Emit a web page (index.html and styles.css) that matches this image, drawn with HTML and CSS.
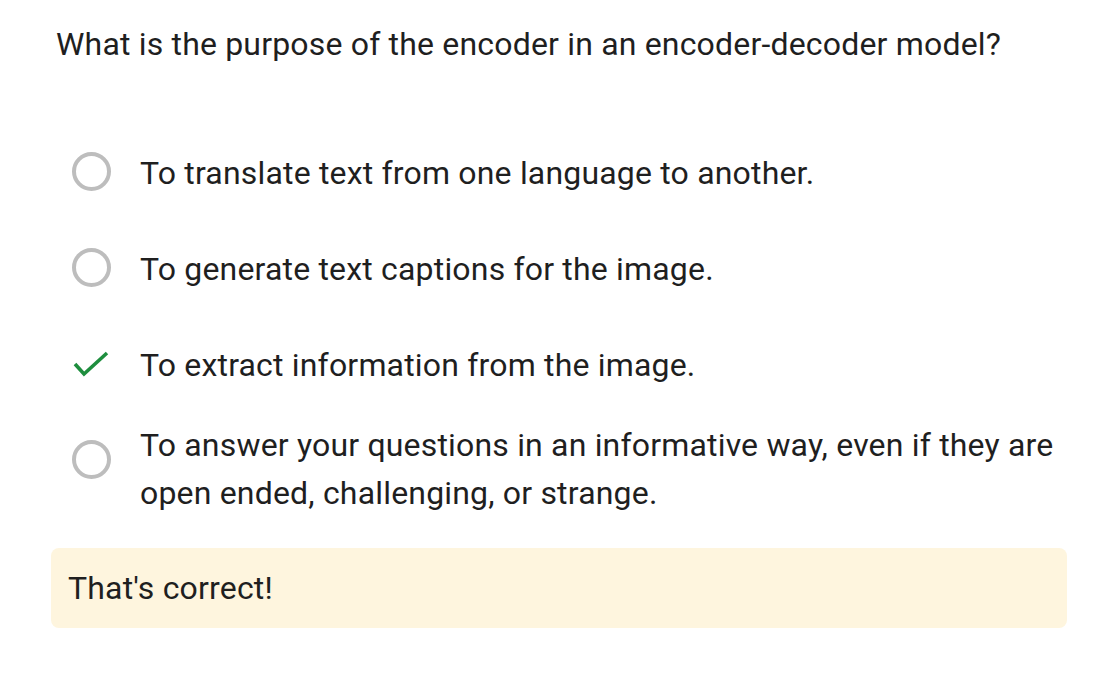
FILE: index.html
```html
<!DOCTYPE html>
<html lang="en">
<head>
<meta charset="utf-8">
<title>Quiz</title>
<link rel="stylesheet" href="styles.css">
</head>
<body>
<main class="quiz">
  <p class="question">What is the purpose of the encoder in an encoder-decoder model?</p>
  <ul class="options">
    <li class="option">
      <span class="radio"></span>
      <span class="option-text">To translate text from one language to another.</span>
    </li>
    <li class="option">
      <span class="radio"></span>
      <span class="option-text">To generate text captions for the image.</span>
    </li>
    <li class="option">
      <svg class="check" width="39" height="39" viewBox="0 0 39 39" aria-hidden="true">
        <polyline points="3,20 12,30 35,9" fill="none" stroke="#1e8e3e" stroke-width="3.6"/>
      </svg>
      <span class="option-text">To extract information from the image.</span>
    </li>
    <li class="option option--long">
      <span class="radio"></span>
      <span class="option-text">To answer your questions in an informative way, even if they are open ended, challenging, or strange.</span>
    </li>
  </ul>
  <div class="feedback">That's correct!</div>
</main>
</body>
</html>
```
FILE: styles.css
```css
html, body {
  margin: 0;
  padding: 0;
  background: #ffffff;
}

body {
  font-family: Roboto, "Noto Sans", Arial, sans-serif;
  color: #1f1f1f;
  font-size: 32px;
  letter-spacing: 0.18px;
}

.quiz {
  padding: 20px 35px 0 51px;
}

.question {
  margin: 0 0 81px 5px;
  line-height: 48px;
}

.options {
  list-style: none;
  margin: 0 0 31px 0;
  padding: 0 0 0 21px;
}

.option {
  display: flex;
  align-items: flex-start;
  gap: 29px;
  line-height: 48px;
}

.option + .option {
  margin-top: 48px;
}

.options .option.option--long {
  margin-top: 32px;
}

.radio {
  flex: none;
  width: 39px;
  height: 39px;
  box-sizing: border-box;
  border: 4px solid #bdbdbd;
  border-radius: 50%;
  margin-top: 3px;
}

.option--long .radio {
  margin-top: 19px;
}

.check {
  flex: none;
  display: block;
  margin-top: 3px;
}

.option-text {
  flex: 1;
  min-width: 0;
}

.feedback {
  background: #fef5de;
  border-radius: 8px;
  padding: 16px 17px;
  line-height: 48px;
}
```
